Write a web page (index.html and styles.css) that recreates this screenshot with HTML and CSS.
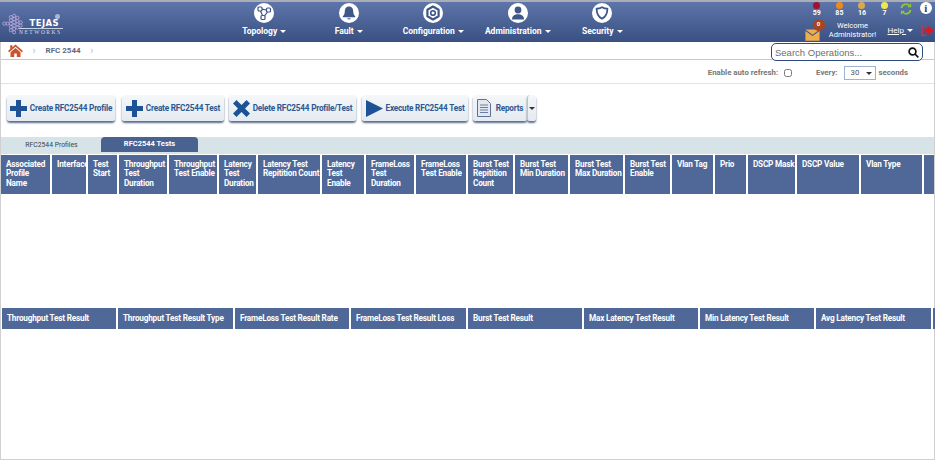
FILE: index.html
```html
<!DOCTYPE html>
<html lang="en">
<head>
    <meta charset="UTF-8">
    <title>RFC 2544 - Tejas Networks</title>
    <link rel="stylesheet" href="styles.css">
</head>
<body>
<div class="page">
    <!-- Top bar -->
    <header class="topbar">
        <div class="logo">
            <svg class="logo-mark" width="23" height="26" viewBox="0 0 35 33" fill="none" stroke="#b9a7dc" stroke-width="1.3">
                <circle cx="5" cy="16" r="2.4"/><circle cx="10" cy="16" r="2.4"/>
                <circle cx="15" cy="6" r="2.4"/><circle cx="15" cy="11" r="2.4"/><circle cx="15" cy="16" r="2.4"/><circle cx="15" cy="21" r="2.4"/><circle cx="15" cy="26" r="2.4"/>
                <circle cx="20" cy="4" r="2.4"/><circle cx="20" cy="9" r="2.4"/><circle cx="20" cy="14" r="2.4"/><circle cx="20" cy="19" r="2.4"/><circle cx="20" cy="24" r="2.4"/><circle cx="20" cy="29" r="2.4"/>
                <circle cx="25" cy="7" r="2.4"/><circle cx="25" cy="12" r="2.4"/><circle cx="25" cy="17" r="2.4"/><circle cx="25" cy="22" r="2.4"/>
                <circle cx="30" cy="14" r="2.4"/><circle cx="30" cy="19" r="2.4"/>
            </svg>
            <div class="logo-text">
                <span class="logo-reg"></span>
                <div class="logo-name">TEJAS</div>
                <div class="logo-sub">NETWORKS</div>
            </div>
        </div>

        <nav class="nav">
            <a class="nav-item">
                <span class="nav-icon">
                    <svg width="16" height="16" viewBox="0 0 16 16" fill="none" stroke="#3f5788" stroke-width="1.2">
                        <rect x="2" y="2" width="4" height="4" rx="1"/><rect x="10.5" y="3" width="4" height="4" rx="1"/><rect x="5" y="10.5" width="4" height="4" rx="1"/>
                        <path d="M6 4.2 10.5 5M4.5 6 6.5 10.5M11.5 7 8.5 10.8"/>
                    </svg>
                </span>
                <span class="nav-label">Topology <i class="caret"></i></span>
            </a>
            <a class="nav-item">
                <span class="nav-icon">
                    <svg width="16" height="16" viewBox="0 0 16 16" fill="#3f5788">
                        <path d="M8 1.5c-2.6 0-4.2 2-4.2 4.4 0 3-1 4.3-2 5.4v.9h12.400v-.9c-1-1.100-2-2.400-2-5.400C12.200 3.500 10.600 1.500 8 1.500Z"/>
                        <path d="M6.200 13.300a1.900 1.900 0 0 0 3.600 0Z"/>
                    </svg>
                </span>
                <span class="nav-label">Fault <i class="caret"></i></span>
            </a>
            <a class="nav-item">
                <span class="nav-icon">
                    <svg width="16" height="16" viewBox="0 0 16 16" fill="none" stroke="#3f5788">
                        <path d="M8 1.500 13.600 4.700V11.300L8 14.500 2.400 11.300V4.700Z" stroke-width="2.200" stroke-linejoin="round"/>
                        <circle cx="8" cy="8" r="2.300" stroke-width="1.600"/>
                    </svg>
                </span>
                <span class="nav-label">Configuration <i class="caret"></i></span>
            </a>
            <a class="nav-item">
                <span class="nav-icon">
                    <svg width="16" height="16" viewBox="0 0 16 16" fill="#3f5788">
                        <circle cx="8" cy="5" r="3.400"/>
                        <path d="M2 14.500c0-3.600 2.600-5.200 6-5.200s6 1.600 6 5.200Z"/>
                    </svg>
                </span>
                <span class="nav-label">Administration <i class="caret"></i></span>
            </a>
            <a class="nav-item">
                <span class="nav-icon">
                    <svg width="16" height="16" viewBox="0 0 16 16" fill="none" stroke="#3f5788" stroke-width="1.800">
                        <path d="M8 2.200c2 1.100 3.600 1.400 5.400 1.400 0 4.800-1.400 8.400-5.400 10.200-4-1.800-5.400-5.400-5.400-10.200 1.800 0 3.400-.3 5.400-1.400Z" stroke-linejoin="round"/>
                    </svg>
                </span>
                <span class="nav-label">Security <i class="caret"></i></span>
            </a>
        </nav>

        <div class="status">
            <div class="status-top">
                <div class="alarm"><span class="alarm-dot dot-critical"></span>59</div>
                <div class="alarm"><span class="alarm-dot dot-major"></span>85</div>
                <div class="alarm"><span class="alarm-dot dot-minor"></span>16</div>
                <div class="alarm"><span class="alarm-dot dot-warning"></span>7</div>
                <svg class="sync" width="12" height="12" viewBox="0 0 12 12" fill="none" stroke="#8cc63f" stroke-width="1.800">
                    <path d="M1.500 5A4.500 4.500 0 0 1 9.500 3M10.500 7A4.500 4.500 0 0 1 2.500 9"/>
                    <path d="M10.500 .8V3.600H7.700M1.500 11.200V8.400H4.300" stroke-width="1.300"/>
                </svg>
                <span class="info">i</span>
            </div>
            <div class="status-bottom">
                <span class="mail">
                    <svg width="15" height="12" viewBox="0 0 17 13">
                        <path d="M.5 2 8.500 7.500 16.500 2V13H.5Z" fill="#eeae4e"/>
                        <path d="M.5 0H16.500L8.500 6Z" fill="#eeae4e" transform="translate(0 .2)"/>
                    </svg>
                    <span class="mail-badge">0</span>
                </span>
                <div class="welcome">Welcome<br>Administrator!</div>
                <a class="help">Help <i class="caret"></i></a>
                <svg class="logout" width="13" height="11" viewBox="0 0 13 11">
                    <path d="M5 .7H1V10.300H5" fill="none" stroke="#e03030" stroke-width="1.200"/>
                    <path d="M3.500 3.500H7.500V.7L12.800 5.500 7.500 10.300V7.500H3.500Z" fill="#e8141c"/>
                </svg>
            </div>
        </div>
    </header>

    <!-- Breadcrumb and search -->
    <div class="crumbs">
        <svg class="home" width="15" height="13" viewBox="0 0 15 13" fill="#cc5229">
            <path d="M7.500 .5 15 7 13.800 8.200 7.500 2.800 1.200 8.200 0 7 2.200 5.100V1.200H4.400V3.200Z"/>
            <path d="M2.500 8.300 7.500 4 12.500 8.300V13H8.800V9.500H6.200V13H2.500Z"/>
        </svg>
        <span class="crumb-sep">&rsaquo;</span>
        <span class="crumb">RFC 2544</span>
        <span class="crumb-sep">&rsaquo;</span>
        <div class="search">
            <input class="search-input" type="text" placeholder="Search Operations...">
            <svg width="11" height="11" viewBox="0 0 11 11" fill="none" stroke="#111" stroke-width="1.700">
                <circle cx="4.500" cy="4.500" r="3.400"/><path d="M7 7 10.300 10.300"/>
            </svg>
        </div>
    </div>

    <!-- Auto refresh -->
    <div class="refresh">
        <span class="refresh-label">Enable auto refresh:</span>
        <input class="refresh-check" type="checkbox">
        <span class="refresh-every">Every:</span>
        <span class="refresh-wrap">
            <select class="refresh-select"><option>30</option></select>
            <i class="caret caret-dark refresh-caret"></i>
        </span>
        <span class="refresh-unit">seconds</span>
    </div>

    <!-- Actions -->
    <div class="toolbar">
        <button class="btn btn-profile">
            <svg width="17" height="17" viewBox="0 0 17 17" fill="#1d5296"><path d="M6 0H11V6H17V11H11V17H6V11H0V6H6Z"/></svg>
            Create RFC2544 Profile
        </button>
        <button class="btn btn-test">
            <svg width="17" height="17" viewBox="0 0 17 17" fill="#1d5296"><path d="M6 0H11V6H17V11H11V17H6V11H0V6H6Z"/></svg>
            Create RFC2544 Test
        </button>
        <button class="btn btn-delete">
            <svg width="17" height="17" viewBox="0 0 17 17" fill="#1d5296"><path d="M3.500 0 8.500 5 13.500 0 17 3.500 12 8.500 17 13.500 13.500 17 8.500 12 3.500 17 0 13.500 5 8.500 0 3.500Z"/></svg>
            Delete RFC2544 Profile/Test
        </button>
        <button class="btn btn-execute">
            <svg width="17" height="17" viewBox="0 0 17 17" fill="#1d5296"><path d="M0 0 17 8.500 0 17Z"/></svg>
            Execute RFC2544 Test
        </button>
        <div class="split">
            <button class="btn btn-reports">
                <svg width="14" height="18" viewBox="0 0 14 18" fill="#e3e8ee" stroke="#5d7196" stroke-width="1">
                    <path d="M.5 .5H9.500L13.500 4.500V17.500H.5Z"/>
                    <path d="M3 6H11M3 8.500H11M3 11H11M3 13.500H11" stroke-width=".9"/>
                </svg>
                Reports
            </button>
            <button class="btn btn-more"><i class="caret caret-dark"></i></button>
        </div>
    </div>

    <!-- Tabs -->
    <div class="tabs">
        <div class="tab">RFC2544 Profiles</div>
        <div class="tab tab-active">RFC2544 Tests</div>
    </div>

    <!-- Tests table -->
    <div class="grid grid-tests">
        <div class="cell">Associated Profile Name</div>
        <div class="cell">Interface</div>
        <div class="cell">Test Start</div>
        <div class="cell">Throughput Test Duration</div>
        <div class="cell">Throughput Test Enable</div>
        <div class="cell">Latency Test Duration</div>
        <div class="cell">Latency Test Repitition Count</div>
        <div class="cell">Latency Test Enable</div>
        <div class="cell">FrameLoss Test Duration</div>
        <div class="cell">FrameLoss Test Enable</div>
        <div class="cell">Burst Test Repitition Count</div>
        <div class="cell">Burst Test Min Duration</div>
        <div class="cell">Burst Test Max Duration</div>
        <div class="cell">Burst Test Enable</div>
        <div class="cell">Vlan Tag</div>
        <div class="cell">Prio</div>
        <div class="cell">DSCP Mask</div>
        <div class="cell">DSCP Value</div>
        <div class="cell">Vlan Type</div>
        <div class="cell"></div>
    </div>

    <!-- Results table -->
    <div class="grid grid-results">
        <div class="cell">Throughput Test Result</div>
        <div class="cell">Throughput Test Result Type</div>
        <div class="cell">FrameLoss Test Result Rate</div>
        <div class="cell">FrameLoss Test Result Loss</div>
        <div class="cell">Burst Test Result</div>
        <div class="cell">Max Latency Test Result</div>
        <div class="cell">Min Latency Test Result</div>
        <div class="cell">Avg Latency Test Result</div>
        <div class="cell"></div>
    </div>
</div>
</body>
</html>
```

FILE: styles.css
```css
html, body {
    margin: 0;
    padding: 0;
    background-color: white;
}

body {
    font-family: Roboto, "Liberation Sans", sans-serif;
    width: 935px;
    height: 465px;
    overflow: hidden;
}

.page {
    box-sizing: border-box;
    height: 460px;
    border: 1px solid #d0d0d0;
    border-top: none;
    background-color: white;
}

/* Top bar */
.topbar {
    display: flex;
    box-sizing: border-box;
    height: 42px;
    margin-left: -1px;
    margin-right: -1px;
    border-top: 2px solid #a9adb5;
    background: linear-gradient(#5d75aa, #3a5082);
    color: white;
}

.logo {
    display: flex;
    flex-shrink: 0;
    box-sizing: border-box;
    width: 222px;
    padding: 9px 0 0 1px;
}

.logo-mark {
    flex-shrink: 0;
    margin-right: -5px;
}

.logo-text {
    position: relative;
    box-sizing: border-box;
    width: 44px;
    height: 26px;
    padding-top: 8px;
}

.logo-name {
    font-family: "DejaVu Sans", sans-serif;
    font-size: 8.5px;
    font-weight: bold;
    letter-spacing: .4px;
    line-height: 8px;
    text-align: right;
    padding-right: 4px;
    border-bottom: 1px solid #c9d2e4;
    padding-bottom: 1px;
}

.logo-sub {
    font-family: "Liberation Serif", serif;
    font-size: 5.5px;
    letter-spacing: 1.500px;
    line-height: 7px;
    color: #d5dcea;
    white-space: nowrap;
}

.logo-reg {
    position: absolute;
    top: 3px;
    right: 3px;
    width: 5px;
    height: 5px;
    border-radius: 50%;
    background-color: #a9b6d6;
}

.nav {
    display: flex;
    flex-shrink: 0;
}

.nav-item {
    display: flex;
    flex-direction: column;
    align-items: center;
    width: 84.5px;
}

.nav-icon {
    display: flex;
    justify-content: center;
    align-items: center;
    width: 20px;
    height: 20px;
    margin-top: 1px;
    border-radius: 50%;
    background-color: white;
}

.nav-label {
    margin-top: 3px;
    font-size: 8.5px;
    font-weight: bold;
    line-height: 11px;
    white-space: nowrap;
}

.caret {
    display: inline-block;
    margin-left: 1px;
    vertical-align: 1px;
    border-left: 3px solid transparent;
    border-right: 3px solid transparent;
    border-top: 3px solid white;
}

.caret-dark {
    border-top-color: #333;
    margin: 0;
}

.status {
    flex: 1;
    min-width: 0;
}

.status-top {
    display: flex;
    align-items: flex-start;
    height: 18px;
    padding-left: 161px;
}

.alarm {
    display: flex;
    flex-direction: column;
    align-items: center;
    width: 22.600px;
    font-size: 7px;
    font-weight: bold;
    line-height: 8px;
}

.alarm-dot {
    width: 7px;
    height: 7px;
    border-radius: 50%;
}

.dot-critical { background-color: #a5112a; }
.dot-major { background-color: #ee8a1d; }
.dot-minor { background-color: #d9a94e; }
.dot-warning { background-color: #efe84d; }

.sync {
    margin: 1px 0 0 4px;
}

.info {
    width: 12px;
    height: 12px;
    margin: 0 0 0 8px;
    border-radius: 50%;
    background-color: white;
    color: #2f3f60;
    font-family: "Liberation Serif", serif;
    font-size: 11px;
    font-weight: bold;
    line-height: 12px;
    text-align: center;
}

.status-bottom {
    display: flex;
    align-items: center;
    height: 20px;
    padding-left: 160px;
}

.mail {
    position: relative;
    display: block;
    width: 17px;
    height: 13px;
    margin-top: 4px;
}

.mail-badge {
    position: absolute;
    top: -7px;
    left: 8px;
    width: 12px;
    height: 12px;
    border-radius: 50%;
    background-color: #a8451f;
    font-size: 6px;
    font-weight: bold;
    line-height: 10px;
    text-align: center;
}

.welcome {
    width: 52px;
    margin-left: 5px;
    font-size: 7.5px;
    line-height: 9px;
    text-align: center;
    white-space: nowrap;
}

.help {
    margin-left: 9px;
    font-size: 8px;
    text-decoration: underline;
    white-space: nowrap;
}

.logout {
    margin-left: 8px;
}

/* Breadcrumb */
.crumbs {
    display: flex;
    align-items: center;
    box-sizing: border-box;
    height: 18px;
    padding: 0 11px 0 7px;
    border-bottom: 1px solid #c8c8c8;
    color: #5d6b85;
}

.home {
    margin-bottom: 1px;
}

.crumb-sep {
    margin: 0 10px 0 9.500px;
    color: #b5bcc8;
    font-size: 10px;
}

.crumb {
    font-size: 8px;
    font-weight: bold;
}

.search {
    display: flex;
    align-items: center;
    box-sizing: border-box;
    width: 152px;
    height: 18px;
    margin-left: auto;
    margin-top: 3px;
    padding: 0 3px;
    border: 1.5px solid #2f4a7f;
    border-radius: 5px;
    background-color: white;
}

.search-input {
    flex: 1;
    min-width: 0;
    padding: 0;
    border: none;
    outline: none;
    font-family: "Liberation Sans", sans-serif;
    font-size: 9.5px;
}

.search-input::placeholder {
    color: #6d6d6d;
}

/* Auto refresh */
.refresh {
    display: flex;
    align-items: center;
    justify-content: flex-end;
    box-sizing: border-box;
    height: 24px;
    padding: 2px 26px 0 0;
    border-bottom: 1px solid #e2e2e2;
    font-size: 7.8px;
    font-weight: bold;
    color: #777;
}

.refresh-check {
    width: 8px;
    height: 8px;
    margin: 0 24px 0 6px;
}

.refresh-wrap {
    position: relative;
    display: flex;
    margin: 0 3px 0 6px;
}

.refresh-select {
    appearance: none;
    box-sizing: border-box;
    width: 32px;
    height: 14px;
    padding: 0 0 0 6px;
    border: 1px solid #9db3cf;
    border-radius: 0;
    background-color: white;
    font-family: Roboto, sans-serif;
    font-size: 7.8px;
    color: #555;
}

.refresh-caret {
    position: absolute;
    top: 6px;
    right: 4px;
}

/* Toolbar */
.toolbar {
    display: flex;
    box-sizing: border-box;
    height: 53px;
    padding: 11px 0 0 6px;
}

.btn {
    display: flex;
    align-items: center;
    justify-content: center;
    gap: 3px;
    box-sizing: border-box;
    height: 26px;
    padding: 0;
    border: none;
    border-radius: 3px;
    background: linear-gradient(#f5f7f9, #e4eaef);
    box-shadow: 0 2px 2px #5c6f8d;
    font-family: Roboto, sans-serif;
    font-size: 8.2px;
    font-weight: bold;
    letter-spacing: -.2px;
    color: #2c5892;
    white-space: nowrap;
}

.btn-profile { width: 108px; margin-right: 7px; }
.btn-test { width: 102px; margin-right: 5px; }
.btn-delete { width: 127px; margin-right: 6px; }
.btn-execute { width: 106px; margin-right: 5px; }
.btn-reports { width: 54px; gap: 5px; }
.btn-more { width: 9px; border-left: 1px solid #b9c3cf; }

.split {
    display: flex;
}

/* Tabs */
.tabs {
    display: flex;
    height: 17px;
    padding-left: 1px;
    background-color: #d6e4e7;
}

.tab {
    width: 99px;
    font-size: 6.8px;
    line-height: 17px;
    text-align: center;
    color: #3a3f48;
}

.tab-active {
    height: 15px;
    width: 97px;
    border-radius: 4px 4px 0 0;
    background-color: #49628f;
    font-size: 7.5px;
    font-weight: bold;
    line-height: 14px;
    color: white;
}

/* Header grids */
.grid {
    display: grid;
    box-sizing: border-box;
    column-gap: 2px;
    color: white;
}

.grid-tests {
    grid-template-columns: 49px 34px 29px 48px 48px 37px 62px 42px 48px 50px 45px 53px 53px 45px 41px 31px 47px 62px 61px 10px;
    height: 40px;
    padding-top: 1px;
    margin-bottom: 114px;
}

.grid-results {
    grid-template-columns: 114px 115px 114px 115px 114px 114px 114px 115px 1px;
    height: 21px;
    padding-left: 1px;
}

.cell {
    box-sizing: border-box;
    padding: 5px 0 0 5px;
    overflow: hidden;
    background-color: #4f6898;
    font-size: 8.2px;
    font-weight: bold;
    letter-spacing: -.2px;
    line-height: 9.300px;
}

.grid-results .cell {
    padding-top: 6px;
    white-space: nowrap;
}
```
